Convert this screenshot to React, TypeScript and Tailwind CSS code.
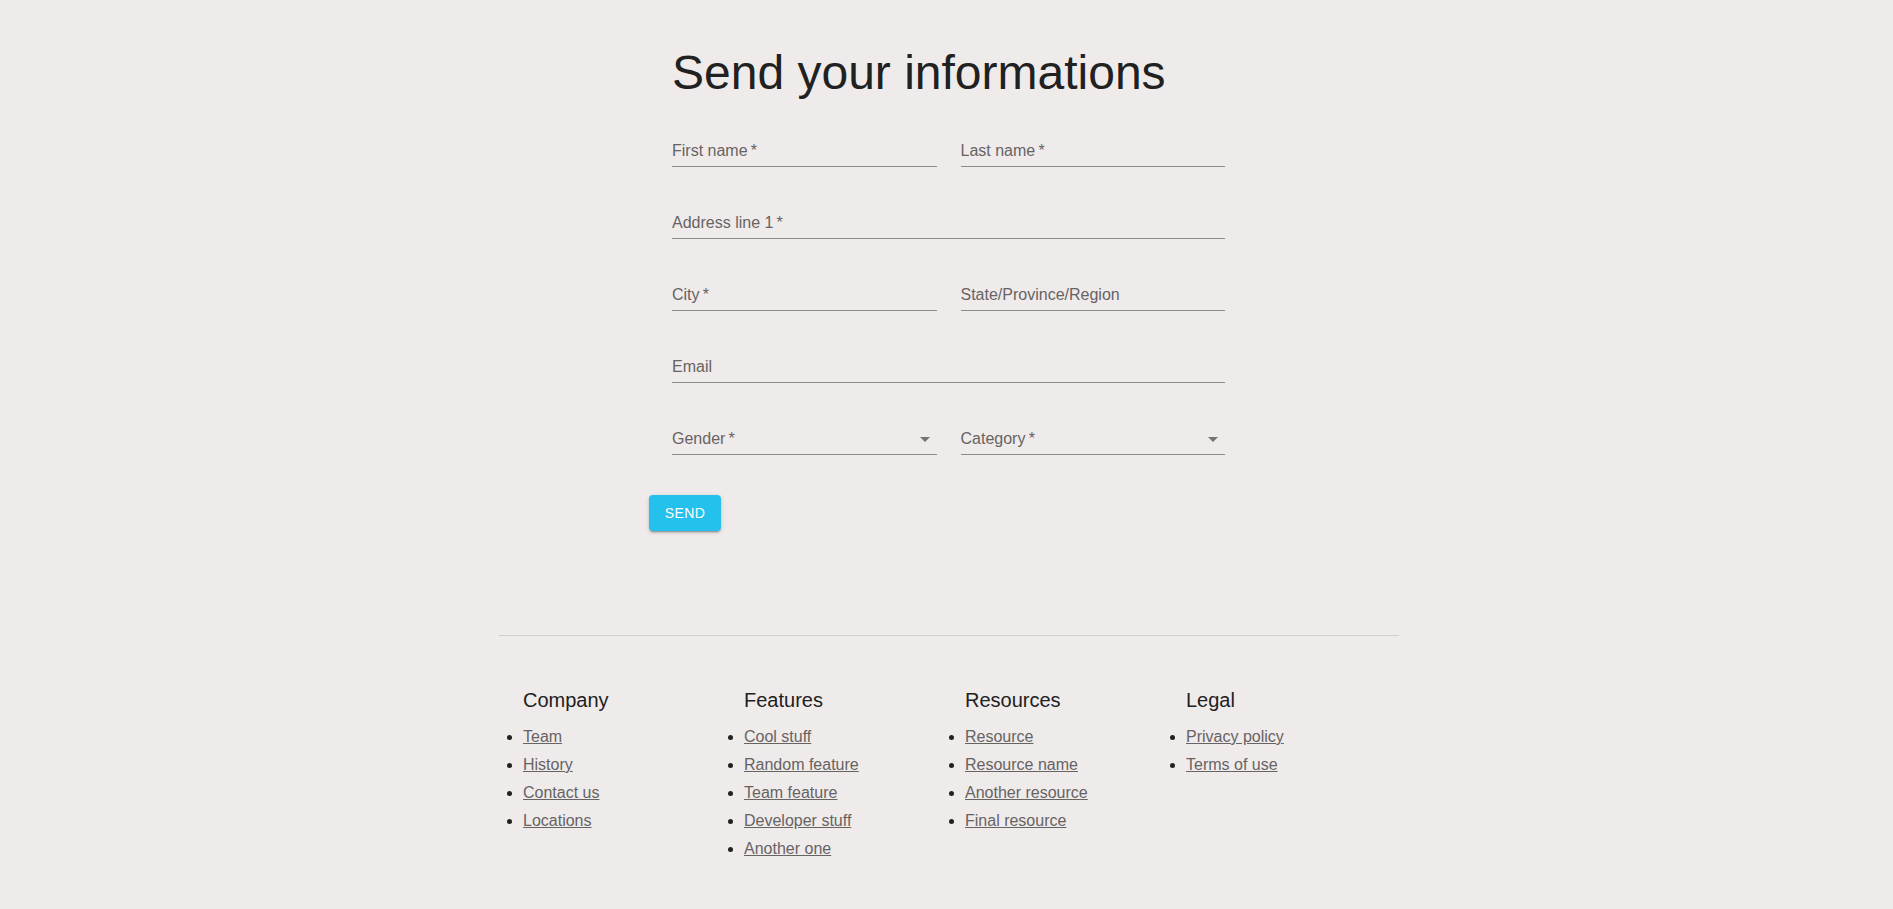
import React from 'react'

const footerColumns = [
  { title: 'Company', links: ['Team', 'History', 'Contact us', 'Locations'] },
  {
    title: 'Features',
    links: ['Cool stuff', 'Random feature', 'Team feature', 'Developer stuff', 'Another one'],
  },
  { title: 'Resources', links: ['Resource', 'Resource name', 'Another resource', 'Final resource'] },
  { title: 'Legal', links: ['Privacy policy', 'Terms of use'] },
]

// 下線だけのテキストフィールド
const Field = ({
  label,
  required = false,
  select = false,
  wide = false,
}: {
  label: string
  required?: boolean
  select?: boolean
  wide?: boolean
}) => (
  <div
    className={`flex h-12 items-end justify-between border-b border-[#8c8989] pb-[6px] ${wide ? 'col-span-2' : ''}`}
  >
    <span className="text-[16px] leading-[19px] text-[#666363]">
      {label}
      {required && '\u2009*'}
    </span>
    {select && (
      <svg viewBox="0 0 24 24" className="mb-[-3px] h-6 w-6 fill-[#757272]">
        <path d="M7 10l5 5 5-5z" />
      </svg>
    )}
  </div>
)

const App = () => {
  return (
    <div className="min-h-screen bg-[#f0ebeb] pl-[5px] font-['Liberation_Sans',Arial,sans-serif] text-[#212121]">
      <div className="mx-auto w-[900px]">
        {/* フォーム */}
        <div className="ml-[150px] pt-[45px]">
          <h1 className="mb-[18px] ml-[23px] text-[48px] leading-[56px] font-normal">Send your informations</h1>
          <div className="ml-[23px] grid w-[553px] grid-cols-2 gap-6">
            <Field label="First name" required />
            <Field label="Last name" required />
            <Field label="Address line 1" required wide />
            <Field label="City" required />
            <Field label="State/Province/Region" />
            <Field label="Email" wide />
            <Field label="Gender" required select />
            <Field label="Category" required select />
          </div>
          <button className="mt-[40px] h-9 w-[72px] rounded-[4px] bg-[#23c1ec] text-[14px] tracking-[0.4px] text-white shadow-[0_3px_1px_-2px_rgba(0,0,0,0.2),0_2px_2px_0_rgba(0,0,0,0.14),0_1px_5px_0_rgba(0,0,0,0.12)]">
            SEND
          </button>
        </div>

        {/* フッター */}
        <div className="mt-[104px] flex border-t border-[#d3cfcf] pt-[52px]">
          {footerColumns.map((col) => (
            <div key={col.title} className="w-[221px] pl-6">
              <h3 className="mb-[11px] text-[20px] leading-[24px] font-normal">{col.title}</h3>
              <ul className="list-outside list-disc pl-0">
                {col.links.map((link) => (
                  <li key={link} className="text-[16px] leading-[28px] text-[#212121]">
                    <a href="#" className="text-[#666363] underline">
                      {link}
                    </a>
                  </li>
                ))}
              </ul>
            </div>
          ))}
        </div>
      </div>
    </div>
  )
}

export default App
